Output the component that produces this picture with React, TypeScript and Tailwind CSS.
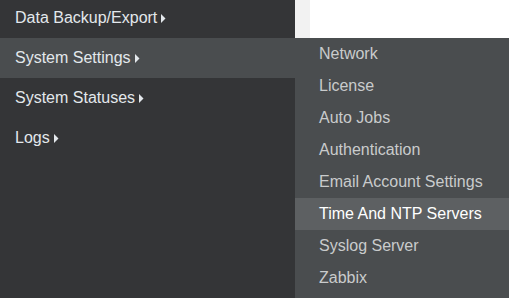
const mainItems = ["Data Backup/Export", "System Settings", "System Statuses", "Logs"];

const subItems = [
  "Network",
  "License",
  "Auto Jobs",
  "Authentication",
  "Email Account Settings",
  "Time And NTP Servers",
  "Syslog Server",
  "Zabbix",
];

const Caret = () => (
  <svg width="5" height="9" viewBox="0 0 5 9" className="ml-[4px] shrink-0">
    <path d="M0 0 L4.5 4.5 L0 9 Z" fill="currentColor" />
  </svg>
);

export default function App() {
  return (
    <div className="flex h-[298px] w-[531px] overflow-hidden bg-white font-['Liberation_Sans',Arial,sans-serif] text-[16px]">
      {/* sidebar */}
      <div className="relative w-[295px] shrink-0 bg-[#343537]">
        <ul className="-mt-[2px]">
          {mainItems.map((item) => (
            <li
              key={item}
              className={`flex h-10 items-center pl-[15px] text-[#e3e8ec] ${
                item === "System Settings" ? "bg-[#4a4d4f]" : ""
              }`}
            >
              {item}
              <Caret />
            </li>
          ))}
        </ul>

        {/* flyout submenu */}
        <ul className="absolute left-[295px] top-[38px] z-10 w-[214px] bg-[#4a4d4f] pb-2">
          {subItems.map((item) => (
            <li
              key={item}
              className={`flex h-8 items-center whitespace-nowrap pl-6 ${
                item === "Time And NTP Servers" ? "bg-[#5d6062] text-white" : "text-[#c9cbcc]"
              }`}
            >
              {item}
            </li>
          ))}
        </ul>
      </div>

      {/* page content behind */}
      <div className="flex flex-1">
        <div className="w-[15px] bg-[#f2f2f2]" />
        <div className="flex-1 bg-white" />
      </div>
    </div>
  );
}
